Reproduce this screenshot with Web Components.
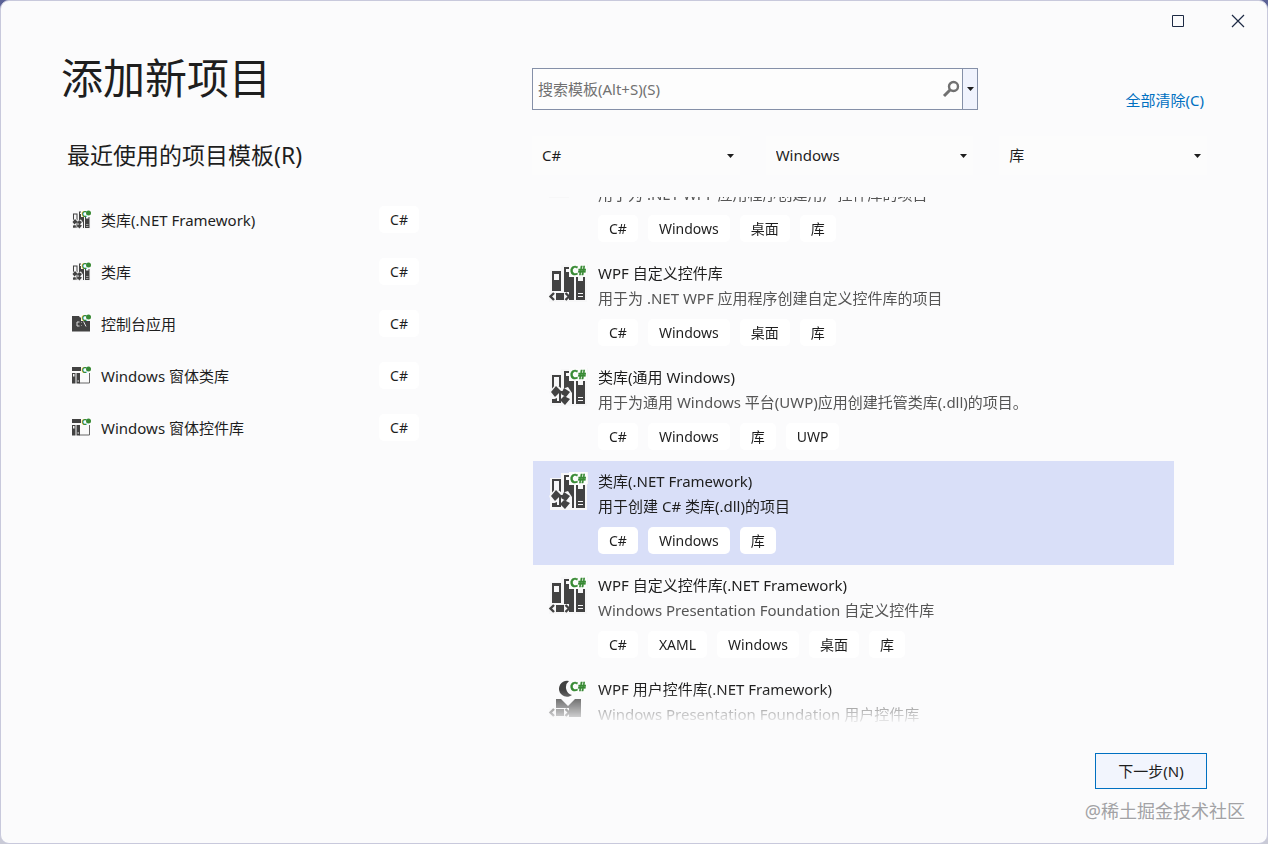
<!DOCTYPE html>
<html lang="zh-CN">
<head>
<meta charset="utf-8">
<title>添加新项目</title>
<style>
  html, body { margin: 0; height: 100%; }
  body {
    background: linear-gradient(#5b6296 0 50%, #c9cad6 50% 100%);
    font-family: "Noto Sans", "Noto Sans CJK SC", sans-serif;
    font-size: 15px;
    color: #1e1e1e;
  }
</style>
</head>
<body>
<new-project-dialog></new-project-dialog>

<script>
const define = (name, html, setup) => {
  const template = document.createElement('template');
  template.innerHTML = html;
  customElements.define(name, class extends HTMLElement {
    constructor() {
      super();
      this.attachShadow({ mode: 'open' }).append(template.content.cloneNode(true));
    }
    connectedCallback() { if (setup) setup(this, this.shadowRoot); }
  });
};

/* ---------- icons, on a 40-unit grid ---------- */
const badge = '<rect x="21" y="2" width="18" height="13" fill="#fcfcfc"/><text x="22" y="13" fill="#388a34" stroke="#388a34" stroke-width=".4" font-family="Noto Sans, sans-serif" font-weight="700" font-size="12.500">C#</text>';
const smallBadge = '<rect x="20" y="0" width="20" height="16" fill="#fcfcfc"/><text x="21" y="15" fill="#388a34" font-family="Noto Sans, sans-serif" font-weight="700" font-size="17">C</text><circle cx="35" cy="8" r="5" fill="#388a34"/>';
const halo = '<path d="M2 8H13V3H21V2H40V14H39V40H2Z" fill="#f7f7f8"/>';
const rightBook = '<path d="M28 15H37V38H28Z" fill="#424242"/><path d="M30 15h5v4h-5zM30 31h5v1h-5zM30 34h5v1h-5z" fill="#f7f7f8"/>';
const midBook = '<path d="M16 5H23V13H26V38H20L16 30Z" fill="#424242"/><path d="M18 7h6v3h-6z" fill="#f7f7f8"/>';
const codeMark = '<path d="M1 30H21V40H1Z" fill="#f7f7f8"/><path d="M6 31L2.500 34.500L6 38M17.500 31L21 34.500L17.500 38" fill="none" stroke="#424242" stroke-width="2.400"/><path d="M8 31H16V38H8Z" fill="#424242"/>';
const icons = {
  custom: halo + '<path d="M4 9H13V29H4Z" fill="#424242"/><path d="M6 12h5v6h-5z" fill="#f7f7f8"/>' + midBook + rightBook + codeMark,
  library: halo + '<path d="M4 9H13V37H4Z" fill="#424242"/><path d="M6 11h5v9h-5z" fill="#f7f7f8"/>' + midBook + rightBook +
    '<path d="M1 26L8 18L14 23L20 21L24 27V39H17L13 35H9V33H4Z" fill="#f7f7f8"/>' +
    '<path d="M3 26L8 20L13 25L7 31ZM16 22L22 26L18 31L13 28ZM16 30L22 33L17 39L12 34ZM4 34L9 32V37H4Z" fill="#424242"/><path d="M9 26H17M12 26V34H16" stroke="#424242" stroke-width="2" fill="none"/>',
  user: '<path d="M24 17A8 8 0 1 1 21 3A8 8 0 0 0 24 17Z" fill="#424242"/><path d="M8 21H13L20 28L27 21H33V39H8Z" fill="#424242"/>' + codeMark,
  console: '<path d="M2 6H16L18 9H38V37H2Z" fill="#424242"/><path d="M17 18H12V26H17M21 19V20M21 25V26M25 17L30 27" stroke="#ddd" stroke-width="2" fill="none"/>',
  form: '<path d="M2 5H37V36H17" fill="#fafafa" stroke="#666" stroke-width="2"/><path d="M2 4H22V12H2Z" fill="#424242"/><path d="M2 16H9V37H2ZM11 16H18V37H11Z" fill="#424242"/><path d="M4 18h3v5h-3zM13 31h3v2h-3z" fill="#f5f5f5"/>',
};

define('template-icon', `
<style>
  :host { display: block; width: 40px; height: 40px; flex: none; }
  :host([small]) { width: 20px; height: 20px; }
  svg { display: block; width: 100%; height: 100%; }
</style>
<svg viewBox="0 0 40 40" aria-hidden="true"></svg>`,
(el, root) => {
  root.querySelector('svg').innerHTML = icons[el.getAttribute('kind')] + (el.hasAttribute('small') ? smallBadge : badge);
});

define('tag-chip', `
<style>
  :host { display: block; flex: none; box-sizing: border-box; height: 27px; line-height: 28px; padding: 0 11px;
          border-radius: 5px; background: #fff; color: #1e1e1e; font-size: 14px; }
</style>
<slot></slot>`);

define('recent-template', `
<style>
  :host { display: block; }
  button { display: flex; align-items: center; gap: 10px; width: 100%; height: 52px; padding: 0 0 0 10px; border: 0;
           background: none; font: inherit; color: inherit; text-align: left; }
  .icon { display: block; }
  .name { flex: 1; }
</style>
<button type="button"><span class="icon"></span><span class="name"><slot></slot></span><tag-chip>C#</tag-chip></button>`,
(el, root) => {
  root.querySelector('.icon').innerHTML = '<template-icon small kind="' + el.getAttribute('kind') + '"></template-icon>';
});

define('project-template', `
<style>
  :host { display: flex; box-sizing: border-box; gap: 10px; padding: 8px 15px 11px; }
  :host([aria-selected="true"]) { background: #d9dff8; }
  .icon { padding-top: 1px; }
  .name, .about { line-height: 25px; white-space: nowrap; }
  .about { color: #555; }
  :host([aria-selected="true"]) .about { color: #1e1e1e; }
  .tags { display: flex; gap: 10px; margin-top: 8px; }
</style>
<div class="icon"></div>
<div>
  <div class="name"><slot name="name"></slot></div>
  <div class="about"><slot></slot></div>
  <div class="tags"></div>
</div>`,
(el, root) => {
  root.querySelector('.icon').innerHTML = '<template-icon kind="' + el.getAttribute('kind') + '"></template-icon>';
  root.querySelector('.tags').innerHTML = el.getAttribute('tags').split(' ').map(t => '<tag-chip>' + t + '</tag-chip>').join('');
});

define('template-list', `
<style>
  :host { display: block; overflow-y: auto; scrollbar-width: none; margin: 0 33px 0 1px;
          mask-image: linear-gradient(to top, rgba(0, 0, 0, .1), #000 32px); }
</style>
<slot></slot>`);

define('filter-select', `
<style>
  :host { display: block; position: relative; }
  select { display: block; width: 100%; height: 39px; padding: 0 30px 2px 10px; border: 0; appearance: none;
           background: #fcfcfc; font: inherit; color: inherit; }
  svg { position: absolute; right: 6px; top: 18px; width: 7px; height: 4px; pointer-events: none; }
</style>
<select></select>
<svg viewBox="0 0 7 4" aria-hidden="true"><path d="M0 0H7L3.500 4Z" fill="#1e1e1e"/></svg>`,
(el, root) => {
  const select = root.querySelector('select');
  select.setAttribute('aria-label', el.getAttribute('label'));
  select.add(new Option(el.getAttribute('value')));
});

define('search-box', `
<style>
  :host { display: flex; box-sizing: border-box; height: 42px; border: 1px solid #8590a8; background: #fdfdfd; }
  input { flex: 1; min-width: 0; border: 0; padding: 0 5px; background: none; font: inherit; color: inherit; outline: 0; }
  input::placeholder { color: #717171; opacity: 1; }
  button { display: flex; align-items: center; justify-content: center; padding: 0; border: 0; background: none; }
  .go { width: 22px; }
  .more { width: 15px; border-left: 1px solid #8590a8; background: #f0f3fd; }
</style>
<input type="text" aria-label="搜索模板" placeholder="搜索模板(Alt+S)(S)">
<button class="go" type="button" aria-label="搜索"><svg width="18" height="18" viewBox="0 0 18 18"><circle cx="11.500" cy="6.500" r="4.500" fill="none" stroke="#717171" stroke-width="2.400"/><path d="M8 10L2 16" stroke="#717171" stroke-width="3"/></svg></button>
<button class="more" type="button" aria-label="搜索选项"><svg width="7" height="4" viewBox="0 0 7 4"><path d="M0 0H7L3.500 4Z" fill="#1e1e1e"/></svg></button>`);

define('window-controls', `
<style>
  :host { display: flex; justify-content: flex-end; height: 39px; margin: 0 -1px 2px 0; flex: none; }
  button { display: flex; align-items: center; justify-content: center; width: 60px; padding: 0; border: 0; background: none; }
</style>
<button type="button" aria-label="最大化"><svg width="14" height="14" viewBox="0 0 14 14"><path d="M1.500 1.500H12.500V12.500H1.500Z" fill="none" stroke="#1d2a44"/></svg></button>
<button type="button" aria-label="关闭"><svg width="14" height="14" viewBox="0 0 14 14"><path d="M1 1L13 13M13 1L1 13" fill="none" stroke="#1d2a44" stroke-width="1.200"/></svg></button>`);

define('new-project-dialog', `
<style>
  :host { display: flex; flex-direction: column; box-sizing: border-box; height: 100vh; overflow: hidden;
          border: 1px solid #c8c9dc; border-radius: 9px; background: #fbfbfc; }
  main { display: grid; flex: 1; min-height: 0; grid-template-columns: minmax(0, 358fr) minmax(0, 675fr); gap: 113px; padding: 0 60px; }
  h1, h2 { margin: 0; font-weight: 400; }
  h1 { padding-top: 8px; font-size: 42px; line-height: 56px; }
  h2 { margin: 33px 0 22px; padding-left: 6px; font-size: 23px; line-height: 32px; }
  .pick { display: flex; flex-direction: column; min-height: 0; padding-top: 26px; }
  .search { display: flex; justify-content: space-between; align-items: flex-end; padding-bottom: 26px; }
  search-box { flex: 0 1 446px; }
  a { margin-right: 3px; line-height: 20px; color: #0070c1; text-decoration: none; }
  .filters { display: grid; grid-template-columns: repeat(3, 1fr); gap: 26px; margin-bottom: 22px; }
  template-list { flex: 1; min-height: 0; }
  footer { display: flex; justify-content: flex-end; padding: 31px 60px 54px; }
  .next { box-sizing: border-box; min-width: 112px; height: 36px; padding-bottom: 2px; border: 1px solid #0070c1;
          background: #f2f5fd; font: inherit; color: inherit; }
  .mark { position: absolute; right: 23px; bottom: 20px; font-size: 18px; line-height: 26px; color: #a2a2a5; text-shadow: 1px 1px 1px #fff; }
</style>
<window-controls></window-controls>
<main>
  <section>
    <h1>添加新项目</h1>
    <h2>最近使用的项目模板(R)</h2>
    <recent-template kind="library">类库(.NET Framework)</recent-template>
    <recent-template kind="library">类库</recent-template>
    <recent-template kind="console">控制台应用</recent-template>
    <recent-template kind="form">Windows 窗体类库</recent-template>
    <recent-template kind="form">Windows 窗体控件库</recent-template>
  </section>
  <section class="pick">
    <div class="search"><search-box></search-box><a href="#">全部清除(C)</a></div>
    <div class="filters">
      <filter-select label="语言" value="C#"></filter-select>
      <filter-select label="平台" value="Windows"></filter-select>
      <filter-select label="项目类型" value="库"></filter-select>
    </div>
    <template-list role="listbox" aria-label="项目模板">
      <project-template role="option" kind="user" tags="C# Windows 桌面 库"><span slot="name">WPF 用户控件库</span>用于为 .NET WPF 应用程序创建用户控件库的项目</project-template>
      <project-template role="option" kind="custom" tags="C# Windows 桌面 库"><span slot="name">WPF 自定义控件库</span>用于为 .NET WPF 应用程序创建自定义控件库的项目</project-template>
      <project-template role="option" kind="library" tags="C# Windows 库 UWP"><span slot="name">类库(通用 Windows)</span>用于为通用 Windows 平台(UWP)应用创建托管类库(.dll)的项目。</project-template>
      <project-template role="option" aria-selected="true" kind="library" tags="C# Windows 库"><span slot="name">类库(.NET Framework)</span>用于创建 C# 类库(.dll)的项目</project-template>
      <project-template role="option" kind="custom" tags="C# XAML Windows 桌面 库"><span slot="name">WPF 自定义控件库(.NET Framework)</span>Windows Presentation Foundation 自定义控件库</project-template>
      <project-template role="option" kind="user" tags="C# XAML Windows 桌面 库"><span slot="name">WPF 用户控件库(.NET Framework)</span>Windows Presentation Foundation 用户控件库</project-template>
    </template-list>
  </section>
</main>
<footer><button class="next" type="button">下一步(N)</button></footer>
<div class="mark">@稀土掘金技术社区</div>`,
(el, root) => { root.querySelector('template-list').scrollTop = 48; });
</script>
</body>
</html>
